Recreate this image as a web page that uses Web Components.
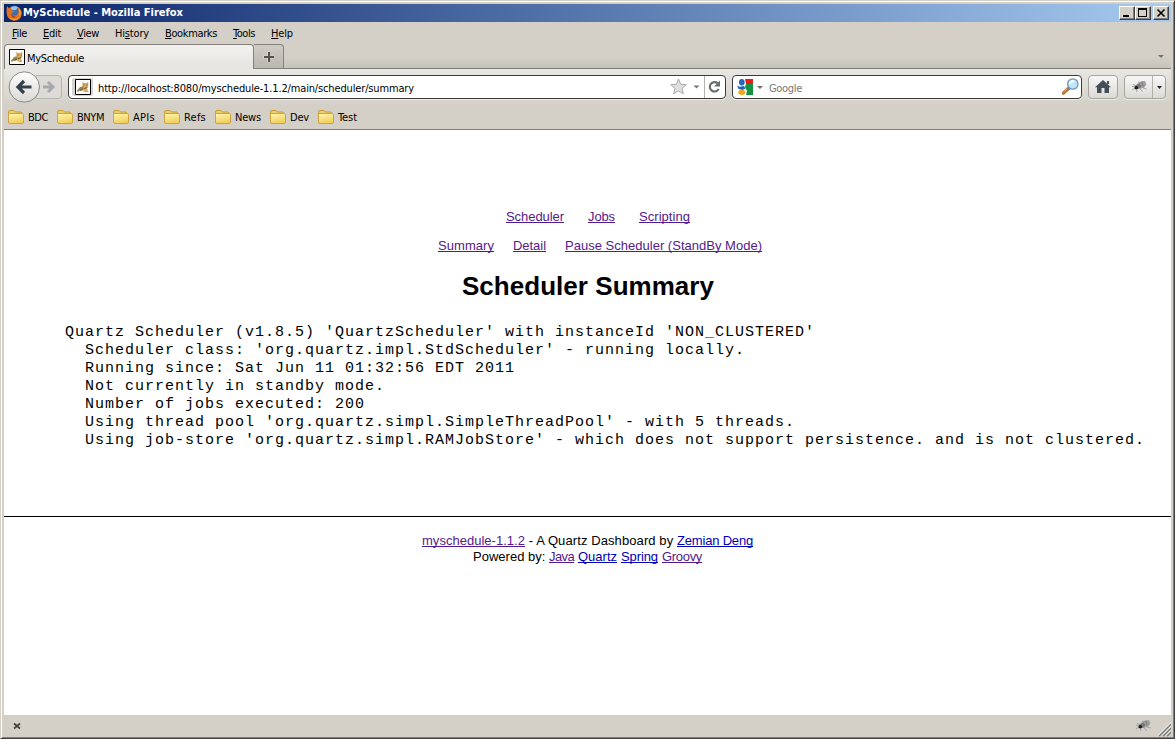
<!DOCTYPE html>
<html lang="en">
<head>
<meta charset="utf-8">
<title>MySchedule - Mozilla Firefox</title>
<style>
html,body{margin:0;height:100%;overflow:hidden;background:#d4d0c8}
</style>
</head>
<body>
<app-window></app-window>
<script>
const define = (name, html, after) => {
  const tpl = document.createElement('template');
  tpl.innerHTML = html.trim();
  customElements.define(name, class extends HTMLElement {
    constructor() {
      super();
      this.attachShadow({mode: 'open'}).append(tpl.content.cloneNode(true));
    }
    connectedCallback() { if (after) after(this, this.shadowRoot); }
  });
};

/* A label tracked out to the width given in its "w" attribute. */
define('fit-text', `<style>:host{display:inline-block;white-space:pre;flex:none}span{display:inline-block;text-decoration:var(--deco,none);text-decoration-thickness:1px;text-underline-offset:1px;text-decoration-skip-ink:none}</style><span><slot></slot></span>`, (el, root) => {
  const w = parseFloat(el.getAttribute('w')), s = root.querySelector('span');
  if (!w) return;
  const n = el.textContent.length;
  s.style.letterSpacing = ((w - s.getBoundingClientRect().width) / n) + 'px';
  el.style.width = w + 'px';
});

define('fox-icon', `
<style>:host{display:block;width:16px;height:16px;flex:none}svg{display:block}</style>
<svg width="16" height="16" viewBox="0 0 16 16"><circle cx="8" cy="7" r="6.500" fill="#3f6fae"/><path d="M4.500 3Q8 0 12 2L10 5 6 5Z" fill="#9cc7e8"/><path d="M1 1L3 3.300 5 3 4.800 5 8 6.200 7 7.500 5.200 8.100Q6 11 9 10.600 13.400 10 12.300 4.800L11.500 1.500Q16 4 15.700 9 15 15.600 8 15.800 1 15 .6 8 .3 4 1 1Z" fill="#e2701c"/><path d="M12.500 2.500Q16.500 8 13 12.500 14.500 8 12.500 2.500Z" fill="#f9d04c"/><path d="M2 10Q4 13.800 8.400 14.100 12 14 13.500 11.500 12 15.200 8 15.200 4 14.500 2 10Z" fill="#f6a93b"/><path d="M5.500 9.200Q7 12 10 11.300L8 12.700Q5 12 5.500 9.200Z" fill="#a53c12"/></svg>`);

define('cat-icon', `
<style>:host{display:block;width:16px;height:16px;flex:none}svg{display:block}</style>
<svg width="16" height="16" viewBox="0 0 16 16"><path d="M.5.5h15v15H.5z" fill="#fff" stroke="#000"/><path d="M7.500 2.500L9 4 11.500 4 13.300 2.500 13.300 8 12 9.500 13.500 13 10 13.300 8 11.500 5.500 12 7 9.500 8.500 8 7.200 6Z" fill="#d4ad62"/><path d="M2 11.500L5 8 8.500 7 8.500 10 5 11.500 2.500 13Z" fill="#a08450"/><path d="M8.500 6h1M11.500 6h1M9 9.600l3-1M5 11.500l3-1.500" stroke="#594624" stroke-width=".9"/></svg>`);

define('bug-icon', `
<style>:host{display:block;width:16px;height:16px;flex:none}svg{display:block}</style>
<svg width="16" height="16" viewBox="0 0 16 16"><path d="M2 5.200L5 7 1 7.500M4 9L1 11M6 10.500L5.500 13M9 10L12 12.600M12 9L15.500 10M7 5L8 2.500" fill="none" stroke="#999" stroke-width=".8"/><path d="M6 5.500Q8 1.500 14 2L15.500 5 13.300 8.500 9 10Z" fill="#a9a9a7"/><path d="M8 4.200L14 4M9 6.500L14.400 6M11 2.500L12 8.500" stroke="#808080" stroke-width=".8"/><ellipse cx="7.400" cy="7.500" rx="2.800" ry="2.300" fill="#777" transform="rotate(-20 7.4 7.8)"/><circle cx="5.200" cy="8.700" r="1.800" fill="#1c1c1c"/></svg>`);

define('caption-button', `
<style>:host{display:block;box-sizing:border-box;width:16px;height:14px;flex:none;background:#d4d0c8;border:1px solid;border-color:#fff #404040 #404040 #fff;box-shadow:inset -1px -1px #808080}</style><slot></slot>`);

define('title-bar', `
<style>
:host{display:flex;box-sizing:border-box;height:18px;flex:none;align-items:center;background:linear-gradient(90deg,#0a246a,#a6caf0);color:#fff;font-weight:bold;padding:0 2px}
fox-icon{margin:-1px 1px 0 0}.sp{flex:1}.gap{width:2px}
svg{display:block}
</style>
<fox-icon></fox-icon><fit-text w="160">MySchedule - Mozilla Firefox</fit-text><div class="sp"></div>
<caption-button><svg width="14" height="12"><path d="M3 8h6v2H3z"/></svg></caption-button>
<caption-button><svg width="14" height="12"><path d="M2 1h9v9H2zM3 3v6h7V3z" fill-rule="evenodd"/></svg></caption-button>
<div class="gap"></div>
<caption-button><svg width="14" height="12"><path d="M3.5 2.5l7 7M10.5 2.5l-7 7" stroke="#000" stroke-width="1.6"/></svg></caption-button>`);

define('menu-bar', `
<style>
:host{display:flex;box-sizing:border-box;height:22px;flex:none;line-height:21px;padding:1px 0 0 8px}
fit-text+fit-text{margin-left:16px}
u{text-decoration:underline;text-underline-offset:1px;text-decoration-thickness:1px}
</style>
<fit-text w="15"><u>F</u>ile</fit-text><fit-text w="18"><u>E</u>dit</fit-text><fit-text w="22"><u>V</u>iew</fit-text><fit-text w="34">Hi<u>s</u>tory</fit-text><fit-text w="52"><u>B</u>ookmarks</fit-text><fit-text w="22"><u>T</u>ools</fit-text><fit-text w="22"><u>H</u>elp</fit-text>`);

define('tab-strip', `
<style>
:host{display:flex;height:25px;flex:none;background:linear-gradient(#d4d0c8 50%,#c6c2ba);box-shadow:inset 0 -1px #807d78}
.tab{box-sizing:border-box;width:250px;height:25px;display:flex;align-items:center;background:linear-gradient(#f3f2f0,#e6e4e0);border:1px solid #85827d;border-bottom:0;border-radius:4px 4px 0 0;padding:0 0 0 4px}
.new{box-sizing:border-box;width:30px;height:25px;border:1px solid #85827d;border-left:0;border-radius:0 4px 0 0;background:linear-gradient(#cfccc5,#bab7b0)}
fit-text{margin:3px 0 0 2px}
.sp{flex:1}svg{display:block}.all{margin:11px 6px 0 0}
</style>
<div class="tab"><cat-icon></cat-icon><fit-text w="57">MySchedule</fit-text></div>
<div class="new"><svg width="29" height="23"><path d="M14.5 6.5v11M9 12h11" stroke="#fff" stroke-width="3" opacity=".35"/><path d="M15 7v10M10 12h10" stroke="#55524e" stroke-width="2"/></svg></div>
<div class="sp"></div><svg class="all" width="7" height="4"><path d="M0 0h6L3 3z" fill="#77736c"/></svg>`);

define('tool-button', `
<style>:host{box-sizing:border-box;display:flex;flex:none;height:24px;border:1px solid #a7a49f;border-radius:4px;background:linear-gradient(#f8f7f6,#dddad5);box-shadow:0 1px #eceae6}</style><slot></slot>`);

define('nav-bar', `
<style>
:host{display:flex;height:36px;flex:none;align-items:center;background:linear-gradient(#e9e7e3,#d4d0c8);padding:0 5px 0 4px}
svg{display:block;flex:none}
.back{margin-right:6px}
.field{box-sizing:border-box;display:flex;align-items:center;height:24px;border:1px solid #3d3b3a;border-radius:4px;background:#fff;box-shadow:0 1px #eeece8}
.url{width:658px;padding-left:3px}
.id{width:21px;height:18px;background:#d8d6d3;border-radius:2px;padding:1px 0 0 3px;box-sizing:border-box}
.url fit-text{margin:3px 0 0 5px}
.rel{border-left:1px solid #b5b3b0;height:22px;width:20px}
.search{width:350px;margin-left:6px;padding-left:4px}
.search fit-text{margin:3px 0 0 5px;color:#777}
.sp{flex:1}
.home{margin-left:6px;width:30px}.bug{margin-left:6px;width:42px}
bug-icon{margin:3px 0 0 6px}.drop{margin-left:5px;border-left:1px solid #b4b1ac}
</style>
<svg class="back" width="54" height="34" viewBox="0 0 54 34">
<defs><linearGradient id="a" x2="0" y2="1"><stop stop-color="#fff"/><stop offset="1" stop-color="#dad8d4"/></linearGradient></defs>
<path d="M28 5.5h22q3.5 0 3.500 3.500v16q0 3.500-3.500 3.500H28z" fill="#dedbd7" stroke="#b6b3ae"/>
<path d="M35 17h9M40 12L45 17l-5 5" fill="none" stroke="#a5a9ab" stroke-width="3"/>
<circle cx="16.300" cy="17" r="15.200" fill="url(#a)" stroke="#8c8985"/>
<path d="M23.500 17h-12M16 11l-6 6 6 6" fill="none" stroke="#36424b" stroke-width="3.200"/></svg>
<div class="field url"><div class="id"><cat-icon></cat-icon></div><fit-text w="316">http://localhost:8080/myschedule-1.1.2/main/scheduler/summary</fit-text><div class="sp"></div>
<svg width="34" height="20"><path d="M8.500 2l2.200 5.300 5.600.4-4.300 3.700 1.400 5.500-4.900-3-4.800 3L5 11.400.8 7.700l5.500-.4z" fill="#e0e0e0" stroke="#aaa" stroke-width="1"/><path d="M23.500 8.500h6l-3 3z" fill="#777"/></svg>
<svg class="rel" width="20" height="22"><path d="M12.700 7.300A4.700 4.700 0 1 0 13.700 13" fill="none" stroke="#6a6c6e" stroke-width="2.200"/><path d="M15 4.500v6H9z" fill="#6a6c6e"/></svg></div>
<div class="field search"><svg width="16" height="16"><rect width="16" height="16" fill="#fff"/><path d="M8 0h8v5H9z" fill="#e81f16"/><path d="M9 5h7v11H9l1-4-2-4z" fill="#159244"/><ellipse cx="4.800" cy="3.200" rx="2.800" ry="3.200" fill="#2864bd"/><path d="M0 6.500l2.500 1.200L7 7l1.500 2.500-3 1.500-4-1z" fill="#2864bd"/><ellipse cx="4.800" cy="13.300" rx="3.500" ry="2.600" fill="#f2a61d"/></svg>
<svg width="11" height="16"><path d="M4 7h6l-3 3z" fill="#707070"/></svg><fit-text w="33">Google</fit-text><div class="sp"></div>
<svg width="19" height="20"><path d="M1.500 16l5.500-5" stroke="#b77742" stroke-width="3.600" stroke-linecap="round"/><path d="M1.500 15l4-3.500" stroke="#e6ac77"/><path d="M6 12l2-2" stroke="#657b91" stroke-width="2.500"/><circle cx="10.800" cy="7" r="5.200" fill="#bfe6fa" stroke="#7594b2" stroke-width="1.300"/><path d="M8 7q0-3 4-3" fill="none" stroke="#fff" stroke-width="2"/></svg></div>
<tool-button class="home"><svg width="28" height="22"><path d="M14 4l8 7.200H20V17h-4.500v-5h-3v5H8v-5.800H6z" fill="#414f5a"/><path d="M18 5h2v3h-2z" fill="#414f5a"/></svg></tool-button>
<tool-button class="bug"><bug-icon></bug-icon><svg class="drop" width="12" height="22"><path d="M4 10h5l-2.500 3z" fill="#222"/></svg></tool-button>`);

define('folder-link', `
<style>:host{display:flex;align-items:center;gap:4px;flex:none}svg{display:block}::slotted(fit-text){margin-top:2px}</style>
<svg width="16" height="14"><defs><linearGradient id="f" x2=".3" y2="1"><stop stop-color="#fff6b4"/><stop offset="1" stop-color="#f1cf5a"/></linearGradient></defs><path d="M.5 12V2q0-1.500 1.500-1.500h4L7.500 2H13l1 1.500V12z" fill="#eccd67" stroke="#c69d35"/><path d="M1 3.500h13q1.500 0 1.500 1V12q0 1.500-1.500 1.500H2Q.500 13.500.5 12V4z" fill="url(#f)" stroke="#cba443"/></svg><slot></slot>`);

define('bookmarks-bar', `
<style>:host{display:flex;box-sizing:border-box;height:25px;flex:none;gap:9px;padding:0 0 0 4px;border-bottom:1px solid #807d79}</style>
<folder-link><fit-text w="20">BDC</fit-text></folder-link><folder-link><fit-text w="27">BNYM</fit-text></folder-link><folder-link><fit-text w="22">APIs</fit-text></folder-link><folder-link><fit-text w="22">Refs</fit-text></folder-link><folder-link><fit-text w="26">News</fit-text></folder-link><folder-link><fit-text w="19">Dev</fit-text></folder-link><folder-link><fit-text w="19">Test</fit-text></folder-link>`);

define('page-link', `<style>:host{display:inline-block;flex:none;color:#551a8b;--deco:underline}:host([fresh]){color:#0000b4}</style><slot></slot>`);

define('page-view', `
<style>
:host{display:flex;flex-direction:column;flex:1;min-height:0;background:#fff;color:#000;font:13px/16px "Liberation Sans",Arial,sans-serif}
nav,.foot div{display:flex}
.main{margin:79px 0 0 502px;gap:24px}.sub{margin:13px 0 0 434px;gap:19px}
h1{margin:16px 0 0 458px;font-size:26px;line-height:32px;height:32px}
pre{margin:22px 0 0 61px;font:15px/18px "Liberation Mono","Courier New",monospace}
pre fit-text{display:block}
.foot{margin-top:66px;border-top:1px solid #000;padding-top:16px}
.foot .a{margin-left:418px}.foot .b{margin-left:469px}
</style>
<nav class="main"><page-link><fit-text w="58">Scheduler</fit-text></page-link><page-link><fit-text w="27">Jobs</fit-text></page-link><page-link><fit-text w="51">Scripting</fit-text></page-link></nav>
<nav class="sub"><page-link><fit-text w="56">Summary</fit-text></page-link><page-link><fit-text w="33">Detail</fit-text></page-link><page-link><fit-text w="197">Pause Scheduler (StandBy Mode)</fit-text></page-link></nav>
<h1><fit-text w="252">Scheduler Summary</fit-text></h1>
<pre></pre>
<div class="foot"><div class="a"><page-link><fit-text w="103">myschedule-1.1.2</fit-text></page-link><fit-text w="152"> - A Quartz Dashboard by </fit-text><page-link fresh><fit-text w="76">Zemian Deng</fit-text></page-link></div>
<div class="b"><fit-text w="76">Powered by: </fit-text><page-link><fit-text w="25">Java</fit-text></page-link><fit-text w="4"> </fit-text><page-link fresh><fit-text w="39">Quartz</fit-text></page-link><fit-text w="4"> </fit-text><page-link fresh><fit-text w="37">Spring</fit-text></page-link><fit-text w="4"> </fit-text><page-link><fit-text w="40">Groovy</fit-text></page-link></div></div>`,
(el, root) => {
  const pre = root.querySelector('pre');
  if (pre.childElementCount) return;
  [
    "Quartz Scheduler (v1.8.5) 'QuartzScheduler' with instanceId 'NON_CLUSTERED'",
    "  Scheduler class: 'org.quartz.impl.StdScheduler' - running locally.",
    "  Running since: Sat Jun 11 01:32:56 EDT 2011",
    "  Not currently in standby mode.",
    "  Number of jobs executed: 200",
    "  Using thread pool 'org.quartz.simpl.SimpleThreadPool' - with 5 threads.",
    "  Using job-store 'org.quartz.simpl.RAMJobStore' - which does not support persistence. and is not clustered."
  ].forEach(t => {
    const l = document.createElement('fit-text');
    l.textContent = t;
    l.setAttribute('w', t.length * 10);
    pre.append(l);
  });
});

define('status-bar', `
<style>:host{display:flex;height:22px;flex:none;background:#d4d0c8;justify-content:space-between}svg{display:block}.r{display:flex}bug-icon{margin:3px 7px 0 0}</style>
<svg width="24" height="22"><path d="M10 8.500l6 5M16 8.500l-6 5" stroke="#45423f" stroke-width="1.700"/></svg>
<div class="r"><bug-icon></bug-icon><svg width="13" height="22"><path d="M1 21L13 9M5 21l8-8M9 21l4-4" stroke="#808080" stroke-width="1.800"/><path d="M0 20.500L13 7.500M4 20.500l9-9M8 20.500l5-5" stroke="#fff"/></svg></div>`);

define('app-window', `
<style>
:host{box-sizing:border-box;display:flex;flex-direction:column;width:1175px;height:739px;padding:3px;background:#d4d0c8;border:1px solid;border-color:#d4d0c8 #404040 #404040 #d4d0c8;box-shadow:inset 1px 1px #fff,inset -1px -1px #808080;color:#000;font:11px/14px "DejaVu Sans Condensed","DejaVu Sans",Tahoma,sans-serif;font-stretch:condensed}
status-bar{margin-bottom:-2px}
</style>
<title-bar></title-bar><menu-bar></menu-bar><tab-strip></tab-strip><nav-bar></nav-bar><bookmarks-bar></bookmarks-bar><page-view></page-view><status-bar></status-bar>`);
</script>
</body>
</html>
